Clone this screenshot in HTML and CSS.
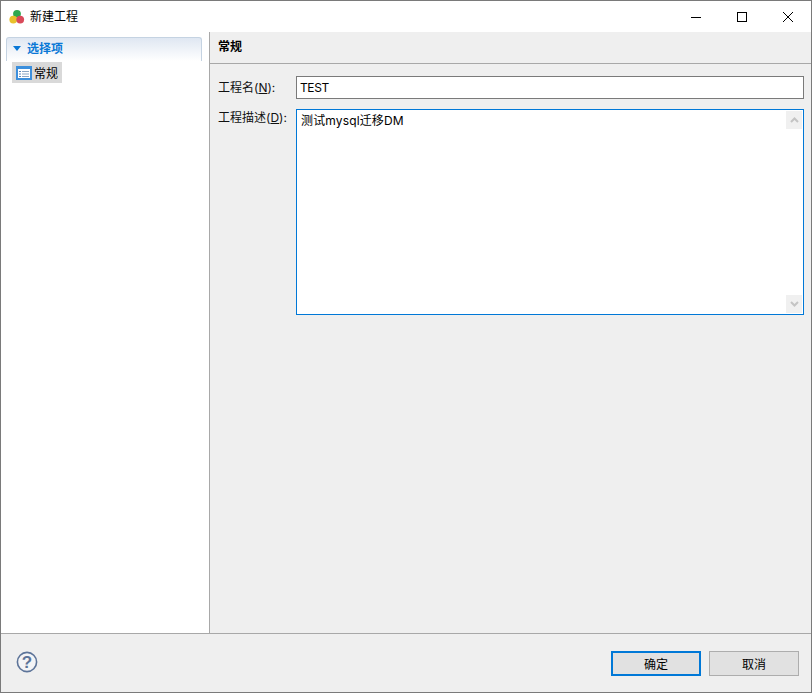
FILE: index.html
```html
<!DOCTYPE html>
<html lang="zh-CN">
<head>
<meta charset="utf-8">
<title>新建工程</title>
<link rel="stylesheet" href="styles.css">
</head>
<body>
<div class="window">
  <header class="titlebar">
    <svg class="app-icon" width="16" height="16" viewBox="0 0 16 16"><circle cx="8" cy="4.8" r="3.9" fill="#2fa84f"/><circle cx="4.3" cy="10.6" r="3.9" fill="#e8c12c"/><circle cx="11.2" cy="10.6" r="3.9" fill="#d94a5a"/></svg>
    <span class="title">新建工程</span>
    <div class="controls">
      <span class="ctl"><svg width="10" height="10" viewBox="0 0 10 10"><path d="M0 5.5H10" stroke="#000" fill="none"/></svg></span>
      <span class="ctl"><svg width="10" height="10" viewBox="0 0 10 10"><rect x=".5" y=".5" width="9" height="9" stroke="#000" fill="none"/></svg></span>
      <span class="ctl"><svg width="10" height="10" viewBox="0 0 10 10"><path d="M0 0L10 10M10 0L0 10" stroke="#000" fill="none"/></svg></span>
    </div>
  </header>
  <div class="main">
    <aside class="sidebar">
      <div class="section-head"><span class="caret"></span>选择项</div>
      <div class="tree-row">
        <div class="tree-item">
          <svg width="16" height="14" viewBox="0 0 16 14"><rect x="1" y="1" width="14" height="12" fill="#fff" stroke="#3c8fdc" stroke-width="2"/><rect x="0" y="0" width="16" height="3" fill="#3c8fdc"/><path d="M3 5.5H5M3 8H5M3 10.5H5" stroke="#5a86b8"/><path d="M6 5.5H13M6 8H13M6 10.5H13" stroke="#8aa6c4"/></svg>
          <span class="tree-label">常规</span>
        </div>
      </div>
    </aside>
    <section class="content">
      <h1 class="page-title">常规</h1>
      <div class="form">
        <div class="field name-field">
          <label class="label">工程名(<u>N</u>):</label>
          <div class="input">TEST</div>
        </div>
        <div class="field desc-field">
          <label class="label">工程描述(<u>D</u>):</label>
          <div class="textarea">
            <div class="textarea-text">测试mysql迁移DM</div>
            <div class="scrollbar">
              <span class="arrow"><svg width="9" height="6" viewBox="0 0 9 6"><path d="M1 5L4.5 1.5L8 5" stroke="#c4c4c4" stroke-width="2" fill="none"/></svg></span>
              <span class="arrow"><svg width="9" height="6" viewBox="0 0 9 6"><path d="M1 1L4.5 4.5L8 1" stroke="#c4c4c4" stroke-width="2" fill="none"/></svg></span>
            </div>
          </div>
        </div>
      </div>
    </section>
  </div>
  <footer class="footer">
    <svg class="help" width="22" height="22" viewBox="0 0 22 22"><circle cx="11" cy="11" r="9.6" fill="#f4f4f6" stroke="#5d7499" stroke-width="1.6"/><text x="11" y="17" text-anchor="middle" class="help-mark">?</text></svg>
    <div class="buttons">
      <button class="btn primary">确定</button>
      <button class="btn">取消</button>
    </div>
  </footer>
</div>
</body>
</html>
```
FILE: styles.css
```css
* { box-sizing: border-box; }
html, body { margin: 0; padding: 0; background: #fff; }
body {
  width: 812px;
  height: 694px;
  font-family: "Inter", "Noto Sans CJK SC", sans-serif;
  font-size: 12px;
  color: #000;
}
.window {
  width: 812px;
  height: 693px;
  border: 1px solid #7a7a7a;
  display: flex;
  flex-direction: column;
  background: #fff;
}
.titlebar {
  height: 31px;
  display: flex;
  align-items: center;
  padding-left: 8px;
  flex: none;
}
.app-icon { margin-right: 5px; }
.title { line-height: 16px; }
.controls { margin-left: auto; display: flex; }
.ctl {
  width: 46px;
  height: 31px;
  display: flex;
  align-items: center;
  justify-content: center;
}
.main { flex: 1; display: flex; min-height: 0; }
.sidebar {
  width: 209px;
  flex: none;
  border-right: 1px solid #a8a8a8;
  background: #fff;
  padding: 5px 7px 0 5px;
}
.section-head {
  height: 24px;
  border: 1px solid #c5d3e2;
  border-bottom: 0;
  border-radius: 3px 3px 0 0;
  background: linear-gradient(#dfe7f2, #ffffff);
  color: #0a78d6;
  font-weight: 700;
  line-height: 20px;
  display: flex;
  align-items: center;
  padding: 0 0 2px 6px;
}
.caret {
  width: 0;
  height: 0;
  border-left: 4px solid transparent;
  border-right: 4px solid transparent;
  border-top: 5px solid #0a78d6;
  margin-right: 6px;
}
.tree-row { padding: 1px 0 0 6px; display: flex; }
.tree-item {
  height: 21px;
  width: 50px;
  background: #d9d9d9;
  display: flex;
  align-items: center;
  padding-left: 4px;
  gap: 2px;
  line-height: 16px;
}
.tree-label { padding-top: 2px; }
.content {
  flex: 1;
  background: #efefef;
  display: flex;
  flex-direction: column;
}
.page-title {
  margin: 0;
  height: 32px;
  flex: none;
  border-bottom: 1px solid #a8a8a8;
  font-size: 12px;
  font-weight: 700;
  line-height: 30px;
  padding-left: 8px;
}
.form { padding: 12px 7px 0 8px; display: flex; flex-direction: column; gap: 10px; }
.field { display: flex; }
.label { width: 78px; flex: none; line-height: 18px; color: #111; }
.name-field .label { padding-top: 3px; }
.input {
  flex: 1;
  height: 23px;
  border: 1px solid #7a7a7a;
  background: #fff;
  padding-left: 3px;
  line-height: 21px;
  letter-spacing: -0.4px;
}
.textarea {
  flex: 1;
  height: 206px;
  border: 1px solid #0078d7;
  background: #fff;
  display: flex;
}
.textarea-text {
  flex: 1;
  padding: 2px 0 0 4px;
  line-height: 17px;
  letter-spacing: 0.15px;
}
.scrollbar {
  width: 17px;
  padding: 1px 1px 1px 0;
  background: #fff;
  display: flex;
  flex-direction: column;
  justify-content: space-between;
}
.arrow {
  height: 18px;
  background: #f0f0f0;
  display: flex;
  align-items: center;
  justify-content: center;
}
.footer {
  height: 59px;
  flex: none;
  background: #efefef;
  border-top: 1px solid #a8a8a8;
  display: flex;
  align-items: center;
  padding: 0 12px 0 15px;
}
.help { margin-top: -2px; }
.help-mark { font: 700 17px "Liberation Sans", sans-serif; fill: #5d7499; }
.buttons { margin-left: auto; display: flex; gap: 8px; margin-top: 1px; }
.btn {
  width: 90px;
  height: 25px;
  background: #e1e1e1;
  border: 1px solid #adadad;
  font: inherit;
  color: #000;
  padding: 0;
}
.primary { border: 2px solid #0078d7; }
```
